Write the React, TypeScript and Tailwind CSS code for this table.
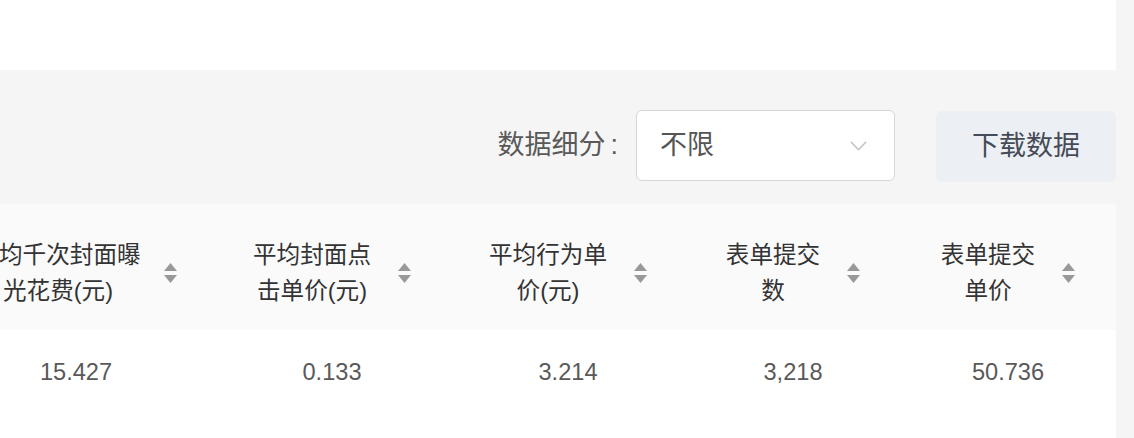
import React from "react";

const font = "font-['Liberation_Sans','Noto_Sans_CJK_SC',sans-serif]";

function Sorter() {
  return (
    <svg width="13" height="20" viewBox="0 0 13 20" className="shrink-0">
      <polygon points="6.5,0 13,8 0,8" fill="#999999" />
      <polygon points="0,12 13,12 6.5,20" fill="#999999" />
    </svg>
  );
}

const cols = [
  { w: "w-[276px]", lines: ["平均千次封面曝", "光花费(元)"], value: "15.427", gap: "gap-[23px]" },
  { w: "w-[236px]", lines: ["平均封面点", "击单价(元)"], value: "0.133", gap: "gap-[27px]" },
  { w: "w-[236px]", lines: ["平均行为单", "价(元)"], value: "3.214", gap: "gap-[27px]" },
  { w: "w-[214px]", lines: ["表单提交", "数"], value: "3,218", gap: "gap-[27px]" },
  { w: "w-[216px]", lines: ["表单提交", "单价"], value: "50.736", gap: "gap-[27px]" },
];

export default function App() {
  return (
    <div className={`w-[1134px] h-[438px] bg-[#f5f5f5] overflow-hidden ${font}`}>
      <div className="w-[1116px]">
        <div className="h-[70px] bg-white" />
        <div className="h-[134px] flex items-start justify-end pt-[40px]">
          <div className="flex items-center">
            <span className="text-[27px] text-[#595959] leading-[71px] mr-[18px]">
              数据细分<span className="ml-[5px]">:</span>
            </span>
            <div className="w-[259px] h-[71px] bg-white border-[1.5px] border-[#d6d6d6] rounded-[6px] flex items-center justify-between pl-[23px] pr-[27px]">
              <span className="text-[27px] text-[#555555]">不限</span>
              <svg width="17" height="10" viewBox="0 0 17 10">
                <polyline points="0.8,0.8 8.5,8.8 16.2,0.8" fill="none" stroke="#bfbfbf" strokeWidth="1.4" />
              </svg>
            </div>
          </div>
          <button className="ml-[41px] mt-[1px] w-[180px] h-[71px] bg-[#eceff3] rounded-[6px] text-[27px] text-[#454b57] flex items-center justify-center">
            下载数据
          </button>
        </div>
        <div className="overflow-hidden">
          <div className="flex ml-[-62px] w-[1178px] h-[126px] bg-[#fafafa]">
            {cols.map((c, i) => (
              <div key={i} className={`${c.w} ${c.gap} shrink-0 flex items-center justify-center pt-[11px]`}>
                <div className="text-center text-[23.6px] leading-[36px] text-[#333333]">
                  {c.lines.map((l, j) => (
                    <div key={j}>{l}</div>
                  ))}
                </div>
                <Sorter />
              </div>
            ))}
          </div>
          <div className="flex ml-[-62px] w-[1178px] h-[108px] bg-white">
            {cols.map((c, i) => (
              <div key={i} className={`${c.w} shrink-0 h-[84px] pt-[2px] flex items-center justify-center text-[23.6px] text-[#595959]`}>
                {c.value}
              </div>
            ))}
          </div>
        </div>
      </div>
    </div>
  );
}
